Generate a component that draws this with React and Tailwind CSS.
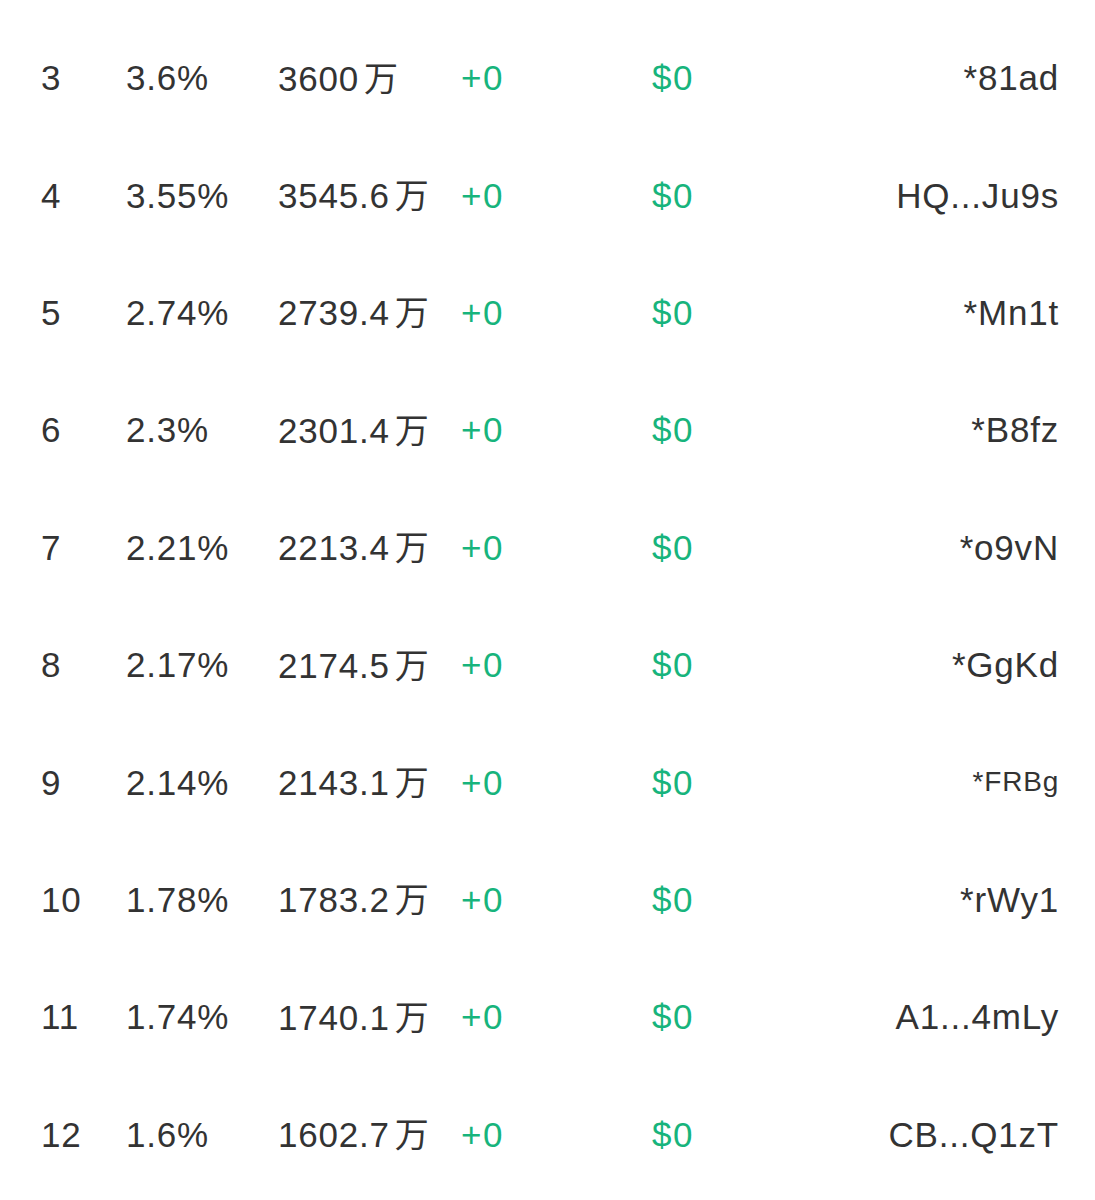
import React from "react";

const rows = [
  ["3", "3.6%", "3600", "*81ad", false],
  ["4", "3.55%", "3545.6", "HQ...Ju9s", false],
  ["5", "2.74%", "2739.4", "*Mn1t", false],
  ["6", "2.3%", "2301.4", "*B8fz", false],
  ["7", "2.21%", "2213.4", "*o9vN", false],
  ["8", "2.17%", "2174.5", "*GgKd", false],
  ["9", "2.14%", "2143.1", "*FRBg", true],
  ["10", "1.78%", "1783.2", "*rWy1", false],
  ["11", "1.74%", "1740.1", "A1...4mLy", false],
  ["12", "1.6%", "1602.7", "CB...Q1zT", false],
];

export default function App() {
  return (
    <div
      className="w-[1095px] h-[1200px] bg-white pt-[19px] text-[#333333] overflow-hidden"
      style={{ fontFamily: '"Liberation Sans", "Noto Sans CJK SC", sans-serif' }}
    >
      {rows.map(([rank, pct, amt, addr, small]) => (
        <div key={rank} className="flex items-center h-[117.4px] text-[35px] leading-none tracking-[0.8px]">
          <div className="w-[85px] pl-[41px] shrink-0 box-content">{rank}</div>
          <div className="w-[152px] shrink-0">{pct}</div>
          <div className="w-[183px] shrink-0 flex items-baseline">
            <span>{amt}</span>
            <span className="ml-[5px] text-[34px]" style={{ fontFamily: '"Noto Sans CJK SC", sans-serif' }}>万</span>
          </div>
          <div className="w-[191px] shrink-0 text-[#17b47c] tracking-[1.5px]">+0</div>
          <div className="shrink-0 text-[#17b47c] tracking-[1.5px]">$0</div>
          <div className={`flex-1 text-right pr-[36px] ${small ? "text-[28px]" : ""}`}>{addr}</div>
        </div>
      ))}
    </div>
  );
}
